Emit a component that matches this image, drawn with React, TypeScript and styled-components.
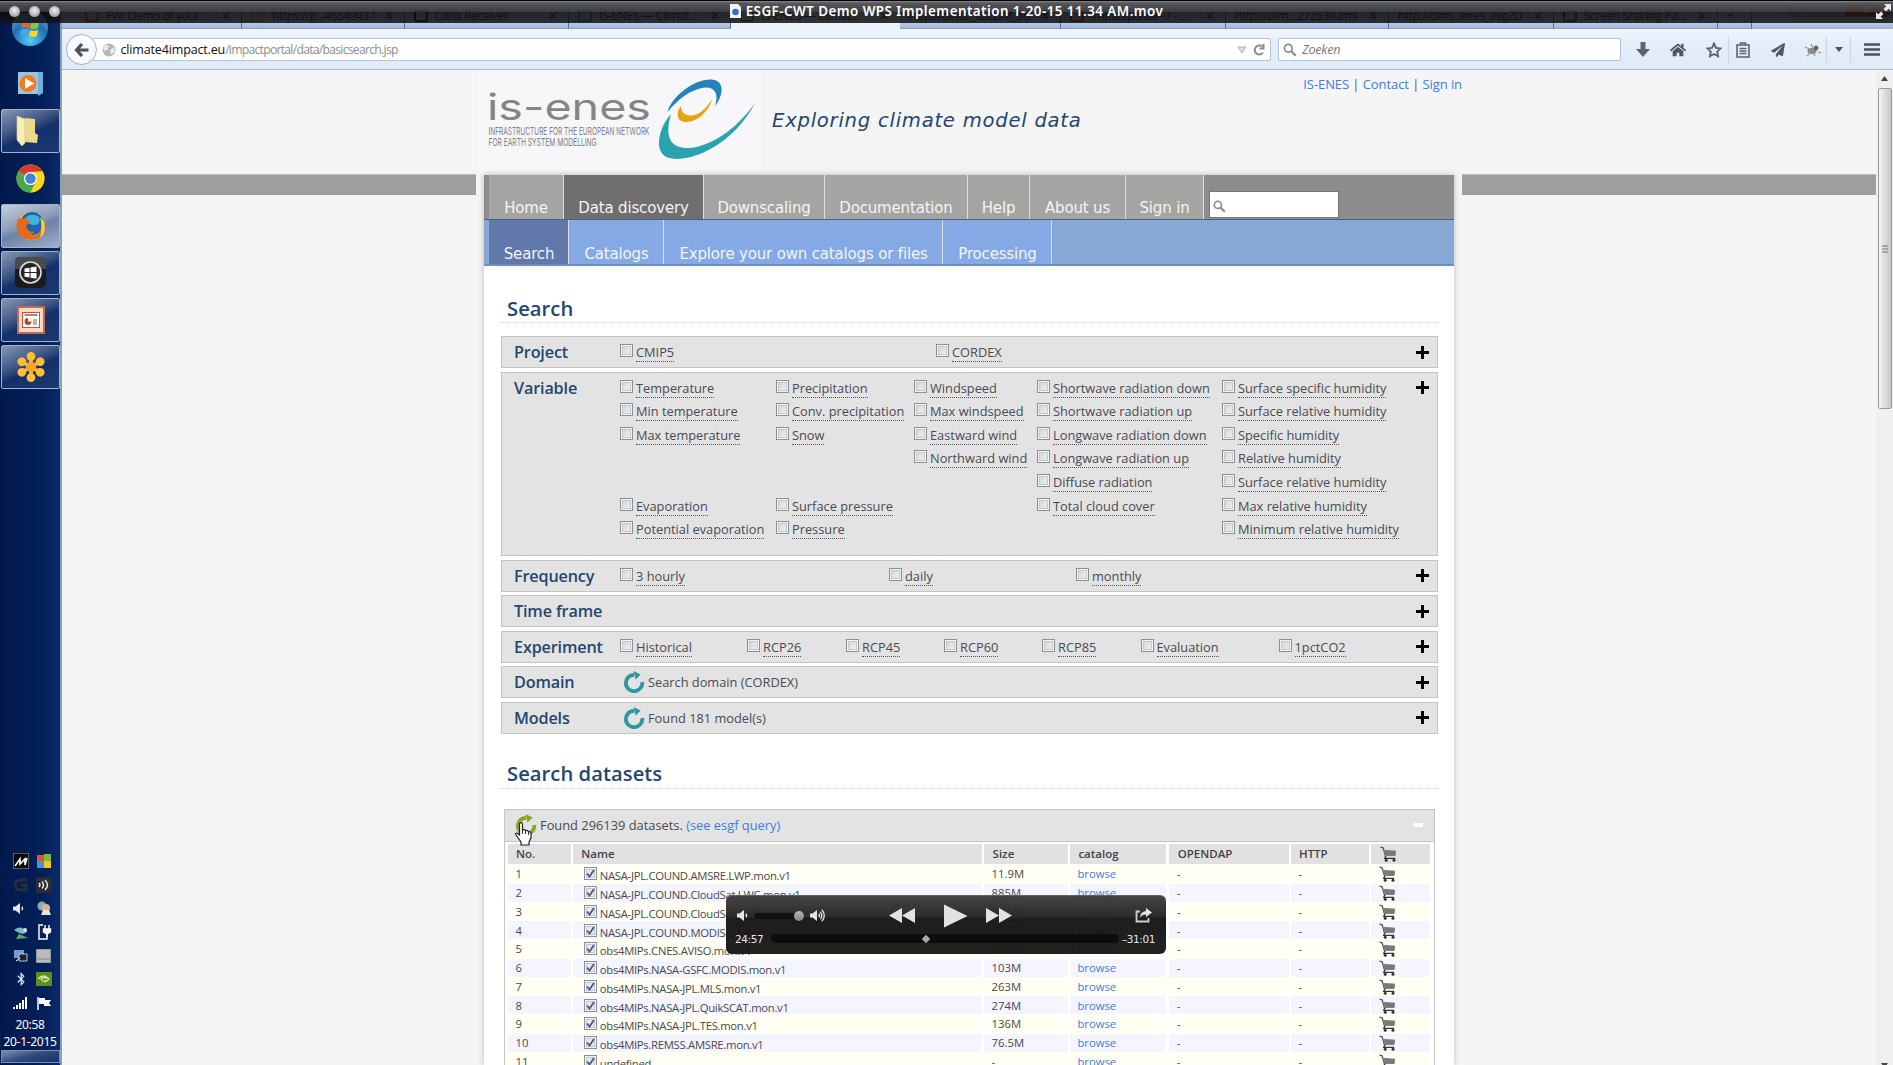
import React from "react";
import styled, { createGlobalStyle } from "styled-components";
import { FaHome, FaPaperPlane, FaBluetoothB } from "react-icons/fa";

const Global = createGlobalStyle`
  * { box-sizing: border-box; }
  html, body { margin: 0; padding: 0; overflow: hidden; background: #f5f5f5; }
  body { font-family: "Open Sans", "Noto Sans", sans-serif; color: #4a4a52; }
`;

const Screen = styled.div`
  position: relative;
  width: 1893px;
  height: 1065px;
  overflow: hidden;
  display: flex;
`;

/* ---------- movie window title ---------- */
const TitleBar = styled.div`
  position: absolute;
  inset: 0 0 auto 0;
  height: 23px;
  border-top: 1px solid #000;
  background: linear-gradient(#8a8a8e 0, rgba(84, 84, 88, 0.97) 2px, rgba(52, 52, 55, 0.95) 11px, rgba(10, 10, 11, 0.86) 11px, rgba(18, 18, 20, 0.86) 22px);
  display: flex;
  align-items: center;
  padding: 0 2px 1px 9px;
  color: #fff;
  z-index: 5;
`;
const Dots = styled.div`
  display: flex;
  gap: 9px;
  flex: 1;
`;
const Dot = styled.span`
  width: 11px;
  height: 11px;
  border-radius: 50%;
  background: radial-gradient(circle at 50% 40%, #f2f2f2, #a5a5a5 70%, #555);
`;
const MovieTitle = styled.div`
  display: flex;
  align-items: center;
  gap: 5px;
  font: 600 13.4px "Noto Sans", sans-serif;
  letter-spacing: 0.45px;
  white-space: nowrap;
  margin: -1px 0 0 -7px;
`;
const Expand = styled.div`
  flex: 1;
  display: flex;
  justify-content: flex-end;
`;

/* ---------- taskbar ---------- */
const Taskbar = styled.aside`
  width: 62px;
  height: 1065px;
  background: linear-gradient(90deg, #02194c, #03205a 75%, #0a2a66 96%);
  border-right: 2px solid #86a0bf;
  display: flex;
  flex-direction: column;
  padding-top: 13px;
`;
const StartOrb = styled.div`
  height: 49px;
  display: flex;
  justify-content: center;
`;
const Task = styled.div<{ $look?: "open" | "active" }>`
  height: 44px;
  margin: 0 0 3.2px 1px;
  display: flex;
  align-items: center;
  justify-content: center;
  border: 1px solid ${(p) => (p.$look ? "#a5b4cb" : "transparent")};
  border-radius: 2px;
  background: ${(p) =>
    p.$look === "active"
      ? "linear-gradient(160deg, #c6cedc, #8a9bb9 45%, #6d82a8 55%, #a3b0c8)"
      : p.$look === "open"
      ? "linear-gradient(155deg, #8797b3 0, #3c5482 40%, #14306a 55%, #1b3a70)"
      : "transparent"};
`;
const Tray = styled.div`
  margin-top: auto;
  display: grid;
  grid-template-columns: 23px 23px;
  grid-auto-rows: 23.7px;
  place-items: center;
  padding-left: 9px;
`;
const Clock = styled.div`
  width: 60px;
  font: 12px/17px "Noto Sans", sans-serif;
  letter-spacing: -0.3px;
  color: #fff;
  text-align: center;
  padding-top: 1px;
  height: 35px;
`;
const ShowDesktop = styled.div`
  height: 13px;
  margin: 0 0 2px 1px;
  border: 1px solid #7c8fae;
  background: linear-gradient(165deg, #7d90b0, #2e4a7c 50%, #17346a);
`;

/* ---------- browser ---------- */
const Browser = styled.div`
  flex: 1;
  display: flex;
  flex-direction: column;
  min-width: 0;
`;
const TabStrip = styled.div`
  height: 29px;
  display: flex;
  background: linear-gradient(#b4c7e2 24px, #9db4d3);
`;
const Tab = styled.div<{ $w: number; $active?: boolean; $first?: boolean }>`
  width: ${(p) => p.$w}px;
  padding: 3px 10px 0 ${(p) => (p.$first ? 23 : 9)}px;
  display: flex;
  align-items: center;
  gap: 7px;
  height: 29px;
  font: 12px "Open Sans", sans-serif;
  letter-spacing: -0.42px;
  color: #333;
  white-space: nowrap;
  border-right: 1px solid ${(p) => (p.$active ? "transparent" : "#57719a")};
  border-bottom: 1px solid ${(p) => (p.$active ? "#edf3fb" : "#8ba2c2")};
  background: ${(p) => (p.$active ? "#eaf2fc" : "transparent")};
`;
const TabIcon = styled.span<{ $c: string }>`
  width: 14px;
  height: 12px;
  flex: none;
  border: 2px solid ${(p) => p.$c};
  border-radius: 3px;
`;
const TabText = styled.span`
  flex: 1;
`;
const WindowButtons = styled.div`
  margin-left: auto;
  margin-right: 3px;
  height: 17px;
  display: flex;
  border: 1px solid #777;
  border-radius: 0 0 4px 4px;
  overflow: hidden;
`;
const WinBtn = styled.span<{ $red?: boolean }>`
  width: ${(p) => (p.$red ? 44 : 28)}px;
  background: ${(p) => (p.$red ? "#c0392b" : "#8fa5c4")};
  color: #fff;
  font: bold 12px/16px "Open Sans", sans-serif;
  text-align: center;
`;
const Toolbar = styled.div`
  height: 41px;
  display: flex;
  align-items: center;
  padding: 1px 0 0 4px;
  background: linear-gradient(#eff4fb, #e4edf9 40%, #e0ebf9);
  border-bottom: 1px solid #a9b7cc;
`;
const Back = styled.div`
  width: 31px;
  height: 31px;
  border-radius: 50%;
  border: 1px solid #a3b0c6;
  background: #f8fafd;
  display: grid;
  place-items: center;
  margin-right: -5px;
  z-index: 1;
`;
const Field = styled.div<{ $w: number; $pad: number }>`
  width: ${(p) => p.$w}px;
  height: 23px;
  display: flex;
  align-items: center;
  gap: 5px;
  padding: 0 4px 0 ${(p) => p.$pad}px;
  margin-right: 7px;
  background: #fff;
  border: 1px solid #b6c2d5;
  border-radius: 2px;
  font: 12.5px "Open Sans", sans-serif;
  letter-spacing: -0.2px;
  color: #8d8d90;
`;
const Host = styled.span`
  color: #111;
  letter-spacing: -0.15px;
`;
const Address = styled.span`
  flex: 1;
  margin-left: -0.5px;
`;
const Path = styled.span`
  color: #8d8d90;
  font-size: 12.2px;
  letter-spacing: -0.74px;
`;
const Zoeken = styled.i`
  color: #777;
`;
const Tools = styled.div`
  flex: 1;
  display: grid;
  grid-template-columns: 29px 41px 30px 29px 41px 28px 24px 1fr;
  align-items: center;
  justify-items: center;
  color: #4e5763;
`;
const ToolCell = styled.span<{ $line?: boolean }>`
  width: 100%;
  height: 26px;
  display: grid;
  place-items: center;
  border-left: 1px solid ${(p) => (p.$line ? "#c9d4e4" : "transparent")};
`;

/* ---------- page ---------- */
const PageArea = styled.div`
  flex: 1;
  display: flex;
  background: #f5f5f5;
  min-height: 0;
`;
const Side = styled.div<{ $w: number }>`
  width: ${(p) => p.$w}px;
  padding-top: 104px;
`;
const Strip = styled.div`
  height: 21px;
  background: #9e9e9e;
  border-top: 1px solid #bbb;
`;
const Center = styled.div`
  width: 986px;
  padding: 0 8px;
`;
const Header = styled.header`
  height: 105px;
  display: flex;
  margin-left: -7px;
  position: relative;
`;
const LogoBox = styled.div`
  width: 285px;
  height: 100px;
  background: #f7f7fa;
`;
const Slogan = styled.h1`
  margin: 0;
  padding: 39px 0 0 10px;
  flex: 1;
  font: italic 19.6px/24px "DejaVu Sans", sans-serif;
  letter-spacing: 0.75px;
  color: #24466f;
  white-space: nowrap;
`;
const TopLinks = styled.div`
  position: absolute;
  right: -8px;
  top: 4px;
  font-size: 13px;
  line-height: 20px;
  letter-spacing: -0.08px;
  white-space: nowrap;
  color: #555;
`;
const Link = styled.a`
  color: #3d7de0;
`;
const Card = styled.div`
  height: 890px;
  background: #fff;
  box-shadow: 0 0 6px rgba(0, 0, 0, 0.25);
`;
const NavBar = styled.nav<{ $sub?: boolean }>`
  height: ${(p) => (p.$sub ? 46 : 45)}px;
  padding-left: 5px;
  display: flex;
  background: ${(p) => (p.$sub ? "#85a8d5" : "#8d8d8d")};
  border-bottom: ${(p) => (p.$sub ? "2px solid #6d8dc0" : "1px solid #4f5f80")};
`;
const NavItem = styled.a<{ $w: number; $sub?: boolean; $on?: boolean }>`
  width: ${(p) => p.$w}px;
  height: 100%;
  padding: ${(p) => (p.$sub ? "23px 0 0 1px" : "22px 0 0 0")};
  text-align: center;
  font: 15px/22px "DejaVu Sans", sans-serif;
  letter-spacing: -0.17px;
  white-space: nowrap;
  color: #f4f4f4;
  border-right: 1px solid #dcdfe4;
  background: ${(p) =>
    p.$sub ? (p.$on ? "#6079aa" : "#85a9e4") : p.$on ? "#6f6f6f" : "#a4a4a2"};
`;
const SiteSearch = styled.div`
  width: 130px;
  height: 27px;
  margin: 16px 0 0 5px;
  background: #fff;
  border: 1px solid #777;
  padding: 4px 3px;
`;
const Heading = styled.h2<{ $top: number }>`
  margin: ${(p) => p.$top}px 14px 0 16px;
  height: 38px;
  padding: 7.5px 0 0 7px;
  font: 600 20.2px/30px "Open Sans", sans-serif;
  letter-spacing: 0.05px;
  color: #24466f;
  border-bottom: 1px dotted #d8d8d8;
`;
const Filters = styled.div`
  padding: 13px 16px 0 17px;
  display: flex;
  flex-direction: column;
  gap: 3.5px;
`;
const FilterBox = styled.section<{ $h: number }>`
  height: ${(p) => p.$h}px;
  background: #e3e3e3;
  border: 1px solid #c4c4c4;
  display: grid;
  grid-template-columns: 106px 1fr 29px;
  padding-left: 12px;
`;
const FilterName = styled.h3`
  margin: 0;
  padding-top: 1px;
  font: 600 16.2px/29px "Open Sans", sans-serif;
  letter-spacing: -0.15px;
  color: #24466f;
  white-space: nowrap;
`;
const Columns = styled.div<{ $cols: string }>`
  display: grid;
  grid-template-columns: ${(p) => p.$cols};
  padding-top: 7px;
`;
const Column = styled.div`
  display: grid;
  grid-auto-rows: 23.67px;
`;
const Option = styled.label`
  display: flex;
  gap: 3px;
  align-items: flex-start;
  white-space: nowrap;
  height: 20px;
`;
const Box = styled.span`
  width: 13px;
  height: 13px;
  flex: none;
  border: 1px solid #8e8f8f;
  background: linear-gradient(135deg, #cdd1d6, #f6f6f6);
  box-shadow: inset 0 0 0 1px #f4f4f4, inset 0 0 0 2px #c4c8cc;
`;
const OptionText = styled.span`
  font-size: 12.8px;
  line-height: 17px;
  height: 18px;
  border-bottom: 1px dotted #555;
`;
const PlusCell = styled.div`
  height: 30px;
  display: grid;
  place-items: center;
`;
const Status = styled.div`
  display: flex;
  align-items: center;
  gap: 3px;
  padding-left: 3px;
  font-size: 12.8px;
  height: 30px;
`;

const Results = styled.section`
  margin: 20px 19px 0 20px;
  border: 1px solid #c4c4c4;
  height: 400px;
`;
const ResultsHead = styled.div`
  height: 32px;
  background: #e3e3e3;
  border-bottom: 1px solid #c4c4c4;
  display: flex;
  align-items: center;
  gap: 3px;
  padding: 0 11px 0 10px;
  font-size: 12.85px;
`;
const Found = styled.div`
  flex: 1;
`;
const Minus = styled.span`
  width: 9px;
  height: 4px;
  background: #fff;
`;
const TableRow = styled.div<{ $head?: boolean }>`
  display: grid;
  grid-template-columns: 63px 409px 84px 96px 120px 78px 59px;
  column-gap: 2.3px;
  margin: ${(p) => (p.$head ? "2.6px 0 0.9px 2.5px" : "0 0 0 2.5px")};
  height: ${(p) => (p.$head ? 20 : 18.74)}px;
  font-size: ${(p) => (p.$head ? 11.5 : 11.3)}px;
  font-weight: ${(p) => (p.$head ? 600 : 400)};
  color: ${(p) => (p.$head ? "#42424a" : "#484850")};
  line-height: 20px;
`;
const Cell = styled.div<{ $bg: string; $pad: number; $head?: boolean }>`
  background: ${(p) => p.$bg};
  padding: ${(p) => (p.$head ? 0 : 1)}px 0 0 ${(p) => p.$pad}px;
  height: ${(p) => (p.$head ? 20 : 18)}px;
  white-space: nowrap;
  display: flex;
  align-items: center;
  overflow: visible;
`;
const Checked = styled(Box)`
  display: grid;
  place-items: center;
  margin: -1px 2.5px 0 -0.5px;
  background: #e6e9f2;
`;
const Name = styled.span`
  padding-top: 4px;
  letter-spacing: -0.3px;
`;

const Scrollbar = styled.div`
  width: 17px;
  background: #f0f0f0;
  display: flex;
  flex-direction: column;
  align-items: center;
  padding-top: 6px;
`;
const Thumb = styled.div`
  margin-top: 7px;
  width: 14px;
  height: 321px;
  border: 1px solid #9a9a9a;
  border-radius: 2px;
  background: linear-gradient(90deg, #f5f5f5, #dcdcde 50%, #c8c8cc);
  display: grid;
  place-items: center;
`;
const ScrollEnd = styled.div`
  margin-top: auto;
  height: 14px;
`;

/* ---------- player ---------- */
const Player = styled.div`
  position: absolute;
  left: 726px;
  top: 895px;
  width: 440px;
  height: 59px;
  border-radius: 6px;
  border-top: 1px solid #606060;
  background: linear-gradient(rgba(62, 62, 62, 0.97), rgba(36, 36, 36, 0.97) 21px, rgba(22, 22, 22, 0.97) 22px, rgba(26, 26, 26, 0.97));
  display: flex;
  flex-direction: column;
  color: #e6e6e6;
  z-index: 4;
`;
const Controls = styled.div`
  height: 37px;
  display: grid;
  grid-template-columns: 152px 55px 42px 149px 1fr;
  align-items: center;
  padding: 2px 0 0 11px;
`;
const Volume = styled.div`
  display: flex;
  align-items: center;
`;
const VolumeTrack = styled.div`
  width: 50px;
  height: 6px;
  margin: 0 6px 0 2px;
  border-radius: 3px;
  background: #111;
  display: flex;
  align-items: center;
  justify-content: flex-end;
`;
const Knob = styled.span`
  width: 10px;
  height: 10px;
  border-radius: 50%;
  background: linear-gradient(#b5b5b5, #858585);
`;
const Timeline = styled.div`
  display: flex;
  align-items: center;
  padding: 0 11px 0 9px;
  height: 11px;
  font: 10.5px "DejaVu Sans", sans-serif;
  letter-spacing: -0.4px;
`;
const Track = styled.div`
  flex: 1;
  height: 9px;
  margin: 0 3px 0 8px;
  border-radius: 5px;
  background: #0d0d0d;
  padding: 0.5px 0 0 152px;
`;
const Diamond = styled.div`
  width: 6px;
  height: 6px;
  margin-top: 1px;
  background: #a8a8a8;
  transform: rotate(45deg);
`;
const Cursor = styled.div`
  position: absolute;
  left: 514px;
  top: 822px;
  z-index: 3;
  line-height: 0;
`;

/* ---------- drawings ---------- */
const Refresh = ({ color }: { color: string }) => (
  <svg width="22" height="22" viewBox="0 0 22 22">
    <path d="M19.200 11a8.200 8.200 0 1 1-8.200-7.200" fill="none" stroke={color} strokeWidth="3.800" />
    <path d="M10.500 0l7.200 3.600-5.200 4.800z" fill={color} />
  </svg>
);
const Plus = () => (
  <svg width="13" height="13" viewBox="0 0 13 13">
    <path d="M6.500 0v13M0 6.500h13" stroke="#000" strokeWidth="3" />
  </svg>
);
const Glass = ({ s }: { s: number }) => (
  <svg width={s} height={s} viewBox="0 0 16 16" fill="none" stroke="#8b8b8b">
    <circle cx="6" cy="6" r="4.400" strokeWidth="2" />
    <path d="M9.500 9.500l5 5" strokeWidth="2.600" />
  </svg>
);
const Cart = () => (
  <svg width="17" height="16" viewBox="0 0 17 16">
    <path d="M0.500 1.200l2.600 0.600L5.800 11" fill="none" stroke="#555" strokeWidth="1.300" />
    <path d="M3.800 3.800L16.200 4.800 15.400 10 5.600 10z" fill="#8b8b8b" />
    <path d="M4 5.800l12 .6M4.800 8l11 .2M7 4v6M9.500 4v6M12 4.500V10M14 4.500V10" stroke="#666" strokeWidth="0.600" />
    <path d="M5.800 10l-1 2.300h10.400" fill="none" stroke="#333" strokeWidth="1.300" />
    <circle cx="6.200" cy="14.200" r="1.500" fill="#333" />
    <circle cx="14" cy="14.200" r="1.500" fill="#333" />
  </svg>
);

const Logo = () => (
  <svg width="285" height="100" viewBox="477 70 285 100">
    <g fill="#858585" fontFamily="Inter, sans-serif">
      <text x="487" y="120.200" fontSize="36" fontWeight="400" textLength="164" lengthAdjust="spacingAndGlyphs">is-enes</text>
      <g fontSize="11" fill="#808080">
        <text x="488.500" y="134.600" textLength="161" lengthAdjust="spacingAndGlyphs">INFRASTRUCTURE FOR THE EUROPEAN NETWORK</text>
        <text x="488.500" y="145.800" textLength="108" lengthAdjust="spacingAndGlyphs">FOR EARTH SYSTEM MODELLING</text>
      </g>
    </g>
    <path fill="#2583bb" d="M667.600 112C671 98 692 79.500 711 79.500C725 80 724 95 715 106C719 94 715 87 705 87.500C691 89 678 99 667.600 112z" />
    <path fill="#2aa3ae" d="M671 114C662 124 658.500 136 659 145C660 156 668 159 677 159C705 158 738 136 755 103C736 130 710 147 688 148C671 148 664 138 671 114z" />
    <path fill="#e8a315" d="M681 106C676 112 676 122 686 122C698 122 709 111 712 99C706 109 699 115 692 115.500C685 116 681 112 681 106z" />
  </svg>
);

const Orb = () => (
  <svg width="38" height="34" viewBox="0 0 38 34">
    <defs>
      <radialGradient id="orb" cx="50%" cy="85%" r="80%">
        <stop offset="0" stopColor="#4fd0f5" />
        <stop offset="0.6" stopColor="#1f6fb0" />
        <stop offset="1" stopColor="#7ea6c8" />
      </radialGradient>
    </defs>
    <circle cx="19" cy="15" r="18" fill="url(#orb)" />
    <path d="M11 9q4-2 8 0l-1 6q-4-2-8 0z" fill="#e8613a" />
    <path d="M20 9q4 2 8 0l-1 6q-4 2-8 0z" fill="#8cc63e" />
    <path d="M10 17q4-2 8 0l-1 6q-4-2-8 0z" fill="#49a9e0" />
    <path d="M19 17q4 2 8 0l-1 6q-4 2-8 0z" fill="#fcd12a" />
  </svg>
);
const MediaIcon = () => (
  <svg width="27" height="26" viewBox="0 0 27 26">
    <path d="M1 1h23v22H1z" fill="#9cc6e0" />
    <path d="M21 1h5v21l-5 3z" fill="#6fb0de" />
    <circle cx="11" cy="12.500" r="8.500" fill="#ec7d22" />
    <path d="M8 7l9 5.500-9 5.500z" fill="#fff" />
  </svg>
);
const FolderIcon = () => (
  <svg width="30" height="32" viewBox="0 0 30 32">
    <path d="M9 3l10 1v14l3 2-1 8-12-1z" fill="#e9d98a" />
    <path d="M1 1l8 3v24l-3 3-5-6z" fill="#f7efb8" stroke="#d8c676" strokeWidth="0.700" />
  </svg>
);
const ChromeIcon = () => (
  <svg width="29" height="29" viewBox="-14.500 -14.500 29 29">
    <circle r="14" fill="#e2c813" />
    <path d="M0 0L-12.100-7A14 14 0 0 1 12.100-7L0-6.500z" fill="#d93a2f" />
    <path d="M0 0L-12.100-7A14 14 0 0 0 0 14L5.500 3z" fill="#4aa84c" />
    <path d="M0-6.500L12.100-7A14 14 0 0 1 0 14L5.600 3.200z" fill="#f9d61f" />
    <circle r="6.600" fill="#fff" />
    <circle r="5.300" fill="#4284d6" />
  </svg>
);
const FirefoxIcon = () => (
  <svg width="30" height="30" viewBox="0 0 30 30">
    <circle cx="15" cy="15" r="14" fill="#f6c32a" />
    <circle cx="16" cy="12.500" r="11.500" fill="#1d66b0" />
    <path d="M9 7q6-6 14-1 2 6-3 8-8 1-11-7z" fill="#3fb3e0" />
    <path d="M3 6l2 2.500q3-1.500 5-.5l2-2v4l3 1.500-3 1.500q-3 2-1 5 3 4 7 2 0 3-4 4 7 2 10-4 3-8 0-14 6 6 4.500 13.500Q26 28.500 15 29 4 28 1 19-.5 11 3 6z" fill="#e8681c" />
    <path d="M24 6q6 6 4.500 13.500-.5 4-4.500 7 3-10 0-20.500z" fill="#f8d23a" />
  </svg>
);
const WindowsBadge = () => (
  <svg width="31" height="31" viewBox="0 0 31 31">
    <rect width="31" height="31" rx="5" fill="#1b1b1c" />
    <path d="M0 5q0-5 5-5h21q5 0 5 5v7H0z" fill="#4a4b4d" />
    <circle cx="15.500" cy="15.500" r="10.500" fill="#262626" stroke="#ddd" strokeWidth="1.600" />
    <path d="M9.500 11.500l5-.8V15h-5zM15.500 10.500l6-1V15h-6zM9.500 16h5v4.500l-5-.8zM15.500 16h6v5.700l-6-1z" fill="#fff" />
  </svg>
);
const SlidesIcon = () => (
  <svg width="28" height="28" viewBox="0 0 28 28">
    <rect x="1" y="1" width="26" height="26" fill="#f3d9cc" stroke="#c4694a" strokeWidth="2" />
    <rect x="5.500" y="6.500" width="17" height="15" fill="#fff" stroke="#b9563a" />
    <path d="M7.500 9h13" stroke="#a9472d" strokeWidth="1.400" />
    <circle cx="11" cy="15.500" r="3.400" fill="#b2462b" />
    <path d="M11 15.500V12a3.500 3.500 0 0 1 3.500 3.500z" fill="#fff" />
    <path d="M16 14h4M16 16h4M16 18h4" stroke="#a5503a" />
  </svg>
);
const FlowerIcon = () => (
  <svg width="30" height="32" viewBox="-15 -16 30 32" fill="#fdbd36">
    {[0, 60, 120, 180, 240, 300].map((a) => (
      <g key={a} transform={`rotate(${a})`}>
        <circle cy="-10.600" r="4.400" />
        <path d="M-1.800-8h3.600v6h-3.600z" />
      </g>
    ))}
    <circle r="5.200" fill="#f9a424" />
  </svg>
);

const Speaker = ({ waves, s = 15 }: { waves: number; s?: number }) => (
  <svg width={s} height={s} viewBox="0 0 15 15" fill="none" stroke="#e6e6e6" strokeWidth="1.300">
    <path d="M0 5.500h2.500L7 2v11L2.500 9.500H0z" fill="#e6e6e6" stroke="none" />
    <path d="M8.800 5.800q1.500 1.700 0 3.400" />
    {waves > 1 && <path d="M10.300 3.800q3 3.700 0 7.400M11.800 1.800q5 5.700 0 11.400" />}
  </svg>
);

const trayIcons: React.ReactNode[] = [
  <svg width="16" height="16"><rect width="16" height="16" fill="#0a0a0a" stroke="#aaa" /><path d="M2 13l5-7v5l5-5v6l2-7" stroke="#fff" strokeWidth="1.600" fill="none" /></svg>,
  <svg width="16" height="16"><path d="M1 2h7v6H1z" fill="#e3562b" /><path d="M8 1h7v7H8z" fill="#7dbb3b" /><path d="M1 8h7v7H1z" fill="#3f95d8" /><path d="M8 8h7v7H8z" fill="#f5c52b" /></svg>,
  <svg width="16" height="16"><path d="M14 3H7Q2 4 2 8.500q1 4.500 5 4.500h6V8H8" stroke="#2a2d33" strokeWidth="3" fill="none" /></svg>,
  <svg width="16" height="16"><rect width="16" height="16" fill="#2a2d33" /><path d="M3 6q2 2 0 4M6 4.500q3 3.500 0 7M9 3q5 5 0 10" stroke="#eee" strokeWidth="1.400" fill="none" /></svg>,
  <Speaker waves={1} s={15} />,
  <svg width="16" height="16"><circle cx="6" cy="6" r="4.500" fill="#8fa7b8" /><circle cx="10" cy="8" r="4" fill="#d8b48e" /><path d="M5 15l2-5h6l2 5z" fill="#e9e4dc" /></svg>,
  <svg width="16" height="16"><path d="M1 6q7-6 13 2l-4 2q-5-1-9-4z" fill="#7fb7c0" /><path d="M3 15l3-5 9 4z" fill="#5ba96b" /><circle cx="12" cy="6" r="2" fill="#ddd" /></svg>,
  <svg width="16" height="16" stroke="#fff" fill="none" strokeWidth="1.400"><path d="M7 1H3v14h8V9" /><path d="M9 1v4M13 1v4M11 9v4" /><path d="M7.500 5h7v3q-3.500 3-7 0z" fill="#fff" /></svg>,
  <svg width="16" height="16"><rect x="1" y="2" width="10" height="8" fill="#6f9ec8" /><path d="M6 6h8v7H6z" fill="#1b2430" stroke="#b8c6d6" /><path d="M3 13l4-3" stroke="#fff" /></svg>,
  <svg width="15" height="14"><rect width="15" height="14" fill="#b8babd" stroke="#777" /><path d="M1 10h13" stroke="#888" /></svg>,
  <FaBluetoothB size={14} color="#e4edf8" />,
  <svg width="16" height="14"><rect width="16" height="14" fill="#5f8f1a" /><path d="M2 7q5-6 11 0-5 5-8 0 3-3 5 0" stroke="#d7e8b4" fill="none" strokeWidth="1.300" /></svg>,
  <svg width="16" height="14" fill="#fff"><path d="M0 11h2v2H0zM3 9h2v4H3zM6 7h2v6H6zM9 4h2v9H9zM12 1h2v12h-2z" /></svg>,
  <svg width="16" height="15"><path d="M2 1v13" stroke="#fff" strokeWidth="1.500" /><path d="M3 2h6v2h6l-2 3 2 3H8V8H3z" fill="#fff" /></svg>,
];

/* ---------- data ---------- */
const tabs: [number, string, string, boolean?][] = [
  [180, "FW: Demo of your ...", "#d93a2f"],
  [163, "https://g...46349437", "#e88a2a"],
  [164, "Citrix Receiver", "#111"],
  [162, "IS-ENES — Climat...", "#3a8b95"],
  [169, "IS-ENES — Climat...", "#3a8b95", true],
  [161, "http://clim..._ICCLIM_So", ""],
  [165, "impactportal - / - ...", "#b33"],
  [163, "http://clim...272539.xml", ""],
  [165, "http://clim...enes_avg2D", ""],
  [164, "Screen Sharing Pa...", "#444"],
];
const nav: [string, number, boolean?][] = [
  ["Home", 75], ["Data discovery", 140, true], ["Downscaling", 121], ["Documentation", 143],
  ["Help", 62], ["About us", 96], ["Sign in", 78],
];
const subnav: [string, number, boolean?][] = [
  ["Search", 80, true], ["Catalogs", 95], ["Explore your own catalogs or files", 279], ["Processing", 109],
];
const filters: { name: string; h: number; cols?: string; options?: string[][]; status?: string }[] = [
  { name: "Project", h: 32, cols: "316px 1fr", options: [["CMIP5"], ["CORDEX"]] },
  {
    name: "Variable", h: 184.5, cols: "156px 138px 123px 185px 1fr",
    options: [
      ["Temperature", "Min temperature", "Max temperature", "", "", "Evaporation", "Potential evaporation"],
      ["Precipitation", "Conv. precipitation", "Snow", "", "", "Surface pressure", "Pressure"],
      ["Windspeed", "Max windspeed", "Eastward wind", "Northward wind"],
      ["Shortwave radiation down", "Shortwave radiation up", "Longwave radiation down", "Longwave radiation up", "Diffuse radiation", "Total cloud cover"],
      ["Surface specific humidity", "Surface relative humidity", "Specific humidity", "Relative humidity", "Surface relative humidity", "Max relative humidity", "Minimum relative humidity"],
    ],
  },
  { name: "Frequency", h: 32, cols: "269px 187px 1fr", options: [["3 hourly"], ["daily"], ["monthly"]] },
  { name: "Time frame", h: 32 },
  {
    name: "Experiment", h: 32, cols: "127px 99px 98px 98px 98.5px 138px 1fr",
    options: [["Historical"], ["RCP26"], ["RCP45"], ["RCP60"], ["RCP85"], ["Evaluation"], ["1pctCO2"]],
  },
  { name: "Domain", h: 32, status: "Search domain (CORDEX)" },
  { name: "Models", h: 32, status: "Found 181 model(s)" },
];
const rows: [string, string][] = [
  ["NASA-JPL.COUND.AMSRE.LWP.mon.v1", "11.9M"],
  ["NASA-JPL.COUND.CloudSat.LWC.mon.v1", "885M"],
  ["NASA-JPL.COUND.CloudSat.LWP.mon.v1", "31.5M"],
  ["NASA-JPL.COUND.MODIS.LWP.mon.v1", "11.9M"],
  ["obs4MIPs.CNES.AVISO.mon.v1", "162M"],
  ["obs4MIPs.NASA-GSFC.MODIS.mon.v1", "103M"],
  ["obs4MIPs.NASA-JPL.MLS.mon.v1", "263M"],
  ["obs4MIPs.NASA-JPL.QuikSCAT.mon.v1", "274M"],
  ["obs4MIPs.NASA-JPL.TES.mon.v1", "136M"],
  ["obs4MIPs.REMSS.AMSRE.mon.v1", "76.5M"],
  ["undefined", "-"],
];
const headings: [string, number][] = [
  ["No.", 8.5], ["Name", 8.5], ["Size", 8.5], ["catalog", 8], ["OPENDAP", 9], ["HTTP", 8],
];
const headBg = "#e1e1e1";

export default function App() {
  return (
    <>
      <Global />
      <Screen>
        <Taskbar>
          <StartOrb><Orb /></StartOrb>
          <Task><MediaIcon /></Task>
          <Task $look="open"><FolderIcon /></Task>
          <Task><ChromeIcon /></Task>
          <Task $look="active"><FirefoxIcon /></Task>
          <Task $look="open"><WindowsBadge /></Task>
          <Task $look="open"><SlidesIcon /></Task>
          <Task $look="open"><FlowerIcon /></Task>
          <Tray>{trayIcons.map((icon, i) => <React.Fragment key={i}>{icon}</React.Fragment>)}</Tray>
          <Clock>20:58<br />20-1-2015</Clock>
          <ShowDesktop />
        </Taskbar>

        <Browser>
          <TabStrip>
            {tabs.map(([w, text, c, on], i) => (
              <Tab key={i} $w={w} $active={on} $first={i === 0}>
                {c && <TabIcon $c={c} />}
                <TabText>{text}</TabText>
                <span>✕</span>
              </Tab>
            ))}
            <Tab $w={34}>+</Tab>
            <WindowButtons><WinBtn>–</WinBtn><WinBtn>▫</WinBtn><WinBtn $red>x</WinBtn></WindowButtons>
          </TabStrip>
          <Toolbar>
            <Back>
              <svg width="15" height="14" viewBox="0 0 15 14"><path d="M8 1L2.500 7 8 13M3 7h11.500" stroke="#4b525e" strokeWidth="3.200" fill="none" /></svg>
            </Back>
            <Field $w={1179} $pad={9}>
              <svg width="14" height="14" viewBox="0 0 14 14"><circle cx="7" cy="7" r="6.500" fill="#b5b5b5" /><path d="M3 2l4 1-1 3-3 2-2-2zM8 7l4-3 1 4-4 4z" fill="#e9e9e9" /></svg>
              <Address><Host>climate4impact.eu</Host><Path>/impactportal/data/basicsearch.jsp</Path></Address>
              <svg width="10" height="8" viewBox="0 0 10 8"><path d="M1 1h8L5 7z" fill="#dcdcde" stroke="#b5b5ba" /></svg>
              <svg width="14" height="14" viewBox="0 0 14 14"><path d="M11 9.500A4.500 4.500 0 1 1 10 3.500M11.500 1v4.500H7.500" fill="none" stroke="#8c8c90" strokeWidth="2" /></svg>
            </Field>
            <Field $w={343} $pad={4}><Glass s={14} /><Zoeken>Zoeken</Zoeken></Field>
            <Tools>
              <ToolCell><svg width="14" height="15" viewBox="0 0 14 15"><path d="M4.500 0h5v7H14l-7 8-7-8h4.500z" fill="#5c6470" /></svg></ToolCell>
              <ToolCell><FaHome size={16} /></ToolCell>
              <ToolCell><svg width="16" height="16" viewBox="0 0 16 16"><path d="M8 1.500l2 4.300 4.600.6-3.400 3.200.9 4.700L8 12l-4.100 2.300.9-4.700L1.400 6.400 6 5.800z" fill="none" stroke="#5a626e" strokeWidth="1.800" /></svg></ToolCell>
              <ToolCell $line><svg width="14" height="16" viewBox="0 0 14 16"><path d="M1 3h12v12H1zM4.500 3V1h5v2M3.500 6.500h7M3.500 9h7M3.500 11.500h7" fill="none" stroke="#5a626e" strokeWidth="1.600" /></svg></ToolCell>
              <ToolCell><FaPaperPlane size={14} /></ToolCell>
              <ToolCell><svg width="17" height="14" viewBox="0 0 17 14"><ellipse cx="8" cy="8" rx="4.500" ry="3" fill="#8a8784" /><circle cx="12" cy="5" r="2.400" fill="#6a6562" /><path d="M1 4l7 3M3 13l4-4M11 13l-2-4M14 9l3 1M9 5L7 1" stroke="#9a9794" strokeWidth="1.200" /></svg></ToolCell>
              <ToolCell $line><svg width="8" height="5"><path d="M0 0h8L4 5z" fill="#4b525e" /></svg></ToolCell>
              <ToolCell $line><svg width="16" height="13"><path d="M0 1.500h16M0 6.500h16M0 11.500h16" stroke="#4b525e" strokeWidth="2.600" /></svg></ToolCell>
            </Tools>
          </Toolbar>

          <PageArea>
            <Side $w={414}><Strip /></Side>
            <Center>
              <Header>
                <LogoBox><Logo /></LogoBox>
                <Slogan>Exploring climate model data</Slogan>
                <TopLinks><Link>IS-ENES</Link> | <Link>Contact</Link> | <Link>Sign in</Link></TopLinks>
              </Header>
              <Card>
                <NavBar>
                  {nav.map(([t, w, on]) => <NavItem key={t} $w={w} $on={on}>{t}</NavItem>)}
                  <SiteSearch><Glass s={13} /></SiteSearch>
                </NavBar>
                <NavBar $sub>
                  {subnav.map(([t, w, on]) => <NavItem key={t} $w={w} $on={on} $sub>{t}</NavItem>)}
                </NavBar>
                <Heading $top={19}>Search</Heading>
                <Filters>
                  {filters.map((f) => (
                    <FilterBox key={f.name} $h={f.h}>
                      <FilterName>{f.name}</FilterName>
                      {f.options ? (
                        <Columns $cols={f.cols!}>
                          {f.options.map((col, i) => (
                            <Column key={i}>
                              {col.map((o, j) => o ? (
                                <Option key={j}><Box /><OptionText>{o}</OptionText></Option>
                              ) : <span key={j} />)}
                            </Column>
                          ))}
                        </Columns>
                      ) : f.status ? (
                        <Status><Refresh color="#2d989f" />{f.status}</Status>
                      ) : <span />}
                      <PlusCell><Plus /></PlusCell>
                    </FilterBox>
                  ))}
                </Filters>
                <Heading $top={17}>Search datasets</Heading>
                <Results>
                  <ResultsHead>
                    <Refresh color="#8aa81c" />
                    <Found>Found 296139 datasets. <Link>(see esgf query)</Link></Found>
                    <Minus />
                  </ResultsHead>
                  <TableRow $head>
                    {headings.map(([h, pad]) => (
                      <Cell key={h} $head $bg={headBg} $pad={pad}>{h}</Cell>
                    ))}
                    <Cell $head $bg={headBg} $pad={9}><Cart /></Cell>
                  </TableRow>
                  {rows.map(([name, size], i) => {
                    const bg = i % 2 ? "#f5f5ff" : "#fffff3";
                    return (
                      <TableRow key={i}>
                        <Cell $bg={bg} $pad={8}>{i + 1}</Cell>
                        <Cell $bg={bg} $pad={12}>
                          <Checked><svg width="9" height="9" viewBox="0 0 9 9"><path d="M1 4.500l2.500 3L8 1" stroke="#4a5a8c" strokeWidth="1.900" fill="none" /></svg></Checked>
                          <Name>{name}</Name>
                        </Cell>
                        <Cell $bg={bg} $pad={7.5}>{size}</Cell>
                        <Cell $bg={bg} $pad={7}><Link>browse</Link></Cell>
                        <Cell $bg={bg} $pad={8}>-</Cell>
                        <Cell $bg={bg} $pad={7.5}>-</Cell>
                        <Cell $bg={bg} $pad={8}><Cart /></Cell>
                      </TableRow>
                    );
                  })}
                </Results>
              </Card>
            </Center>
            <Side $w={414}><Strip /></Side>
            <Scrollbar>
              <svg width="7" height="5"><path d="M0 5h7L3.500 0z" fill="#444" /></svg>
              <Thumb><svg width="6" height="8"><path d="M0 1h6M0 4h6M0 7h6" stroke="#777" /></svg></Thumb>
              <ScrollEnd><svg width="7" height="5"><path d="M0 0h7L3.500 5z" fill="#444" /></svg></ScrollEnd>
            </Scrollbar>
          </PageArea>
        </Browser>

        <Cursor>
          <svg width="20" height="24" viewBox="0 0 20 24">
            <path d="M6 1q2-1 2.500 1v6q2-1 3 .6 2-.8 3 1 2-.3 2.500 1.400v5l-2 4v3H7v-3L2 13q-1-2 1-2l2.500 2V2z" fill="#fff" stroke="#222" strokeWidth="1.200" />
            <path d="M8.500 8v4M11.500 9v3M14.500 10v3" stroke="#333" />
          </svg>
        </Cursor>

        <Player>
          <Controls>
            <Volume>
              <Speaker waves={1} />
              <VolumeTrack><Knob /></VolumeTrack>
              <Speaker waves={3} />
            </Volume>
            <svg width="27" height="15" viewBox="0 0 27 15"><path d="M13 0v15L0 7.500zM26 0v15L13 7.500z" fill="#e2e2e2" /></svg>
            <svg width="24" height="24" viewBox="0 0 24 24"><path d="M0 0.500L23.500 12 0 23.500z" fill="#e2e2e2" /></svg>
            <svg width="27" height="15" viewBox="0 0 27 15"><path d="M0 0v15l13-7.500zM13 0v15l13-7.500z" fill="#e2e2e2" /></svg>
            <svg width="17" height="15" viewBox="0 0 17 15"><path d="M5 3.500H1.500v10h12V10" fill="none" stroke="#cfcfcf" strokeWidth="1.800" /><path d="M11 0l6 4.500-6 4.500V6.500Q7 6 5 10q0-6 6-7z" fill="#e6e6e6" /></svg>
          </Controls>
          <Timeline><span>24:57</span><Track><Diamond /></Track><span>–31:01</span></Timeline>
        </Player>

        <TitleBar>
          <Dots><Dot /><Dot /><Dot /></Dots>
          <MovieTitle>
            <svg width="11" height="14" viewBox="0 0 11 14"><path d="M0 0h8l3 3v11H0z" fill="#f2f2f2" /><circle cx="5.500" cy="8" r="3.300" fill="#2f6fc4" /></svg>
            ESGF-CWT Demo WPS Implementation 1-20-15 11.34 AM.mov
          </MovieTitle>
          <Expand>
            <svg width="15" height="15" viewBox="0 0 15 15" fill="#e8e8e8"><path d="M8 0h7v7l-2.300-2.300L10 7.500 7.500 5l2.800-2.700zM7 15H0V8l2.300 2.300L5 7.500 7.500 10l-2.800 2.700z" /></svg>
          </Expand>
        </TitleBar>
      </Screen>
    </>
  );
}
